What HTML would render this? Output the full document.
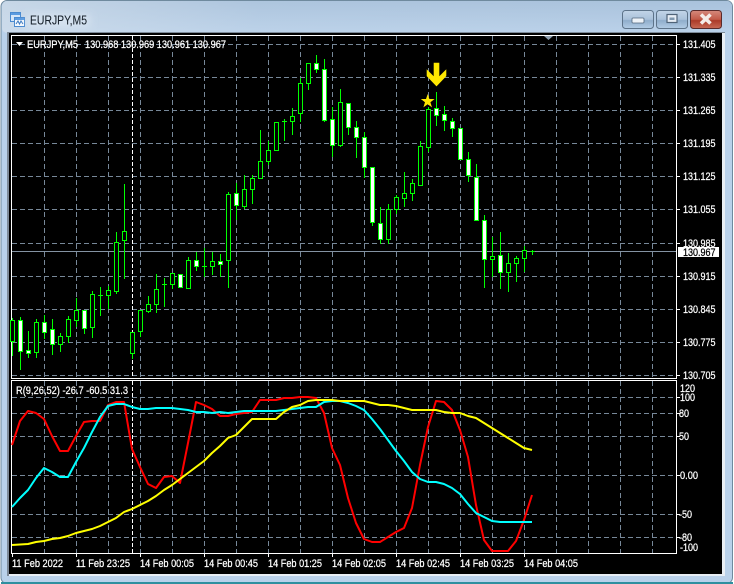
<!DOCTYPE html>
<html><head><meta charset="utf-8"><title>EURJPY,M5</title>
<style>
html,body{margin:0;padding:0;background:#fff;width:734px;height:584px;overflow:hidden}
svg{display:block}
text{font-family:"Liberation Sans",sans-serif;font-size:11px;fill:#fff;stroke:#fff;stroke-width:.25px}
</style></head><body>
<svg width="734" height="584" viewBox="0 0 734 584" xmlns="http://www.w3.org/2000/svg">
<defs>
<linearGradient id="tb" x1="0" y1="0" x2="0" y2="1"><stop offset="0" stop-color="#a9c2dc"/><stop offset="1" stop-color="#bad1e9"/></linearGradient>
<linearGradient id="tl" x1="0" y1="0" x2="1" y2="0"><stop offset="0" stop-color="#d4e0ec" stop-opacity=".7"/><stop offset=".35" stop-color="#d4e0ec" stop-opacity=".1"/><stop offset="1" stop-color="#d4e0ec" stop-opacity="0"/></linearGradient>
<linearGradient id="bn" x1="0" y1="0" x2="0" y2="1"><stop offset="0" stop-color="#c3d5e8"/><stop offset=".5" stop-color="#a9c1da"/><stop offset=".55" stop-color="#8fadcb"/><stop offset="1" stop-color="#b3cde6"/></linearGradient>
<linearGradient id="cl" x1="0" y1="0" x2="0" y2="1"><stop offset="0" stop-color="#d58a7d"/><stop offset=".5" stop-color="#c25a48"/><stop offset=".55" stop-color="#ab3a28"/><stop offset="1" stop-color="#c86a55"/></linearGradient>
<filter id="gl" x="-20%" y="-50%" width="140%" height="200%"><feGaussianBlur stdDeviation="4"/></filter>
</defs>
<!-- window -->
<rect x="1" y=".5" width="731.500" height="583" rx="6" fill="#b9d1ea" stroke="#6f8a9e"/>
<rect x="2" y="1" width="730" height="32" rx="5" fill="url(#tb)"/>
<rect x="2" y="1" width="730" height="32" rx="5" fill="url(#tl)"/>
<rect x="1" y="582" width="732" height="2" fill="#2f8f9f"/>
<rect x="7" y="32" width="718" height="544" fill="#e8eef4"/>
<rect x="7" y="32" width="2" height="544" fill="#7d8a98"/>
<rect x="7" y="32" width="718" height="1" fill="#7d8a98"/>
<rect x="9" y="33" width="713" height="541" fill="#000"/>
<!-- title icon -->
<g shape-rendering="crispEdges">
<rect x="10.500" y="12.500" width="10" height="9" fill="#d6e6f8" stroke="#4a8ad0"/>
<rect x="11" y="13" width="9" height="2" fill="#5b9be0"/>
<rect x="14.500" y="17.500" width="10" height="9" fill="#f4f8fd" stroke="#4a8ad0"/>
<rect x="15" y="18" width="9" height="2" fill="#5b9be0"/>
</g>
<path d="M16 24l2-3 1.500 3 1.500-3 2 3" fill="none" stroke="#3a78c0" stroke-width="1"/>
<rect x="28" y="14" width="62" height="13" fill="#e4edf6" opacity=".55" filter="url(#gl)"/>
<text x="30" y="24.500" textLength="57" lengthAdjust="spacingAndGlyphs" style="font-size:13px;fill:#18222c;stroke:#18222c;stroke-width:.1px">EURJPY,M5</text>
<!-- buttons -->
<rect x="622.500" y="10.500" width="31" height="18" rx="3" fill="url(#bn)" stroke="#5d7389"/>
<rect x="632" y="18" width="12" height="5" rx="1" fill="#eef3f8" stroke="#53687e" stroke-width=".8"/>
<rect x="656.500" y="10.500" width="31" height="18" rx="3" fill="url(#bn)" stroke="#5d7389"/>
<rect x="667" y="14.500" width="10" height="8" fill="#e6edf5" stroke="#4f6378" stroke-width="1.200"/>
<rect x="669.500" y="17.500" width="5" height="2.500" fill="#7f97ae"/>
<rect x="690.500" y="10.500" width="31" height="18" rx="3" fill="url(#cl)" stroke="#5a2a2a"/>
<path d="M701 14.500l9.500 9M710.500 14.500l-9.500 9" stroke="#f4ece8" stroke-width="3.600" fill="none"/>
<!-- grids -->
<g stroke="#778899" fill="none" stroke-dasharray="5 3" shape-rendering="crispEdges">
<path d="M12 44.500H676M12 77.500H676M12 110.500H676M12 143.500H676M12 176.500H676M12 209.500H676M12 243.500H676M12 276.500H676M12 309.500H676M12 342.500H676M12 375.500H676"/>
<path d="M44.500 36V378M76.500 36V378M108.500 36V378M140.500 36V378M172.500 36V378M204.500 36V378M236.500 36V378M268.500 36V378M300.500 36V378M332.500 36V378M364.500 36V378M396.500 36V378M428.500 36V378M460.500 36V378M492.500 36V378M524.500 36V378M556.500 36V378M588.500 36V378M620.500 36V378M652.500 36V378"/>
<path d="M12 397.500H676M12 413.500H676M12 436.500H676M12 475.500H676M12 514.500H676M12 537.500H676"/>
<path d="M44.500 381V553M76.500 381V553M108.500 381V553M140.500 381V553M172.500 381V553M204.500 381V553M236.500 381V553M268.500 381V553M300.500 381V553M332.500 381V553M364.500 381V553M396.500 381V553M428.500 381V553M460.500 381V553M492.500 381V553M524.500 381V553M556.500 381V553M588.500 381V553M620.500 381V553M652.500 381V553"/>
</g>
<path d="M132.500 36V378M132.500 381V553" stroke="#fff" stroke-dasharray="4 2" fill="none" shape-rendering="crispEdges"/>
<path d="M12 251.500H676" stroke="#8493a3" shape-rendering="crispEdges"/>
<!-- frames -->
<g fill="none" stroke="#fff" shape-rendering="crispEdges">
<rect x="11.500" y="35.500" width="665" height="343"/>
<rect x="11.500" y="380.500" width="665" height="173"/>
<path d="M677 44.500h3M677 77.500h3M677 110.500h3M677 143.500h3M677 176.500h3M677 209.500h3M677 243.500h3M677 276.500h3M677 309.500h3M677 342.500h3M677 375.500h3M677 397.500h3M677 413.500h3M677 436.500h3M677 475.500h3M677 514.500h3M677 537.500h3"/>
<path d="M12.500 553v4M76.500 553v4M140.500 553v4M204.500 553v4M268.500 553v4M332.500 553v4M396.500 553v4M460.500 553v4M524.500 553v4"/>
</g>
<polygon points="544,36 553,36 548.500,40" fill="#8fa0b0"/>
<!-- candles: wicks -->
<g shape-rendering="crispEdges">
<path fill="none" stroke="#0f0" d="M12.500 318V356M20.500 317V370M28.500 331V358M36.500 319V358M44.500 315V339M52.500 319V355M60.500 333V352M68.500 316V343M76.500 298V327M84.500 310V334M92.500 291V338M100.500 287V316M108.500 286V309M116.500 232V294M124.500 184V279M132.500 332V359M140.500 310V337M148.500 296V313M156.500 274V313M164.500 278V307M172.500 273V289M180.500 274V288M188.500 257V289M196.500 252V271M204.500 248V277M212.500 252V275M220.500 254V277M228.500 192V288M236.500 183V220M244.500 175V209M252.500 175V204M260.500 130V179M268.500 141V165M276.500 122V150M284.500 119V141M292.500 108V135M300.500 78V122M308.500 63V90M316.500 55V73M324.500 59V122M332.500 107V157M340.500 89V147M348.500 103V135M356.500 121V158M364.500 132V178M372.500 167V226M380.500 207V244M388.500 204V244M396.500 195V214M404.500 172V207M412.500 179V201M420.500 141V186M428.500 107V152M436.500 92V126M444.500 106V131M452.500 118V137M460.500 128V159M468.500 152V182M476.500 164V221M484.500 215V288M492.500 237V277M500.500 232V289M508.500 253V292M516.500 256V282M524.500 246V272M532.500 250V255M98 295.500h5M162 284.500h5M202 266.500h5M282 121.500h5M530 251.500h5"/>
<!-- bullish bodies -->
<g fill="#000" stroke="#0f0">
<rect x="10.500" y="320.500" width="4" height="21"/>
<rect x="34.500" y="322.500" width="4" height="30"/>
<rect x="58.500" y="336.500" width="4" height="8"/>
<rect x="66.500" y="319.500" width="4" height="17"/>
<rect x="74.500" y="310.500" width="4" height="10"/>
<rect x="90.500" y="294.500" width="4" height="33"/>
<rect x="106.500" y="290.500" width="4" height="5"/>
<rect x="114.500" y="242.500" width="4" height="49"/>
<rect x="122.500" y="231.500" width="4" height="9"/>
<rect x="130.500" y="332.500" width="4" height="21"/>
<rect x="138.500" y="310.500" width="4" height="21"/>
<rect x="146.500" y="304.500" width="4" height="7"/>
<rect x="154.500" y="289.500" width="4" height="15"/>
<rect x="170.500" y="273.500" width="4" height="11"/>
<rect x="186.500" y="260.500" width="4" height="28"/>
<rect x="210.500" y="261.500" width="4" height="5"/>
<rect x="226.500" y="194.500" width="4" height="66"/>
<rect x="242.500" y="189.500" width="4" height="17"/>
<rect x="250.500" y="178.500" width="4" height="11"/>
<rect x="258.500" y="161.500" width="4" height="17"/>
<rect x="266.500" y="150.500" width="4" height="11"/>
<rect x="274.500" y="122.500" width="4" height="28"/>
<rect x="290.500" y="116.500" width="4" height="5"/>
<rect x="298.500" y="83.500" width="4" height="30"/>
<rect x="306.500" y="63.500" width="4" height="20"/>
<rect x="338.500" y="102.500" width="4" height="43"/>
<rect x="386.500" y="209.500" width="4" height="30"/>
<rect x="394.500" y="197.500" width="4" height="12"/>
<rect x="402.500" y="193.500" width="4" height="5"/>
<rect x="410.500" y="183.500" width="4" height="10"/>
<rect x="418.500" y="146.500" width="4" height="39"/>
<rect x="426.500" y="109.500" width="4" height="38"/>
<rect x="490.500" y="256.500" width="4" height="3"/>
<rect x="506.500" y="263.500" width="4" height="9"/>
<rect x="514.500" y="258.500" width="4" height="5"/>
<rect x="522.500" y="250.500" width="4" height="8"/>
</g>
<!-- bearish bodies -->
<g fill="#fff" stroke="#0f0">
<rect x="18.500" y="320.500" width="4" height="31"/>
<rect x="26.500" y="350.500" width="4" height="3"/>
<rect x="42.500" y="322.500" width="4" height="10"/>
<rect x="50.500" y="329.500" width="4" height="15"/>
<rect x="82.500" y="310.500" width="4" height="18"/>
<rect x="178.500" y="274.500" width="4" height="13"/>
<rect x="194.500" y="260.500" width="4" height="6"/>
<rect x="218.500" y="261.500" width="4" height="3"/>
<rect x="234.500" y="193.500" width="4" height="12"/>
<rect x="314.500" y="63.500" width="4" height="6"/>
<rect x="322.500" y="69.500" width="4" height="51"/>
<rect x="330.500" y="119.500" width="4" height="26"/>
<rect x="346.500" y="103.500" width="4" height="24"/>
<rect x="354.500" y="127.500" width="4" height="10"/>
<rect x="362.500" y="137.500" width="4" height="30"/>
<rect x="370.500" y="167.500" width="4" height="55"/>
<rect x="378.500" y="223.500" width="4" height="16"/>
<rect x="434.500" y="108.500" width="4" height="7"/>
<rect x="442.500" y="114.500" width="4" height="6"/>
<rect x="450.500" y="121.500" width="4" height="7"/>
<rect x="458.500" y="128.500" width="4" height="31"/>
<rect x="466.500" y="159.500" width="4" height="16"/>
<rect x="474.500" y="177.500" width="4" height="43"/>
<rect x="482.500" y="220.500" width="4" height="39"/>
<rect x="498.500" y="255.500" width="4" height="17"/>
</g>
</g>
<!-- arrow & star -->
<polygon points="434,63 439,63 439,77 446,70 446,76 436.500,86 427,76 427,70 434,77" fill="#ffe800" stroke="#ffe800" stroke-width=".6"/>
<polygon points="427.700,94 429.400,99 434.600,99 430.400,102.200 432,107.400 427.700,104.200 423.400,107.400 425,102.200 420.800,99 426,99" fill="#ffe800"/>
<!-- lines -->
<g fill="none" stroke-width="2" stroke-linejoin="round">
<polyline stroke="#f00" points="12,445 20,421 28,411 36,413 44,419 52,436 60,451 68,451 76,436 84,422 92,421 100,421 108,405 116,402 124,402 132,449 140,467 148,484 156,488 164,477 172,476 180,483 188,443 196,402 204,405 212,409 220,416 228,416 236,414 244,413 252,412 260,400 268,400 276,400 284,398 292,398 300,397 308,397 316,398 324,413 332,448 340,465 348,498 356,523 364,539 372,542 380,542 388,537 396,532 404,528 412,508 420,465 428,427 436,401 444,402 452,410 460,430 468,457 476,505 484,540 492,551 500,551 508,551 516,541 524,520 532,495"/>
<polyline stroke="#0ff" points="12,507 20,498 28,490 36,478 44,468 52,472 60,477 68,477 76,462 84,448 92,432 100,417 108,406 116,404 124,404 132,407 140,409 148,409 156,408 164,408 172,408 180,409 188,410 196,412 204,412 212,413 220,412 228,413 236,412 244,411 252,411 260,411 268,411 276,411 284,410 292,409 300,408 308,407 316,407 324,402 332,401 340,401 348,403 356,406 364,410 372,419 380,429 388,440 396,451 404,461 412,472 420,479 428,482 436,482 444,484 452,488 460,494 468,504 476,513 484,517 492,521 500,522 508,522 516,522 524,522 532,522"/>
<polyline stroke="#ff0" points="12,545 28,544 36,542 44,541 52,539 60,538 68,536 76,533 84,531 92,529 100,526 108,522 116,518 124,512 132,509 140,505 148,501 156,496 164,490 172,485 180,479 188,473 196,467 204,461 212,453 220,446 228,438 236,435 244,427 252,419 260,419 268,419 276,419 284,412 292,407 300,405 308,401 316,400 324,400 332,400 340,401 348,401 356,401 364,401 372,403 380,405 388,405 396,406 404,408 412,410 420,410 428,410 436,410 444,412 452,413 460,413 468,416 476,418 484,423 492,428 500,433 508,438 516,443 524,448 532,450"/>
</g>
<!-- header text -->
<polygon points="16,42 23,42 19.500,46" fill="#fff"/>
<text x="27" y="48" textLength="51" lengthAdjust="spacingAndGlyphs">EURJPY,M5</text>
<text x="85" y="48" textLength="141" lengthAdjust="spacingAndGlyphs">130.968 130.969 130.961 130.967</text>
<text x="16" y="394" textLength="112" lengthAdjust="spacingAndGlyphs">R(9,26,52) -26.7 -60.5 31.3</text>
<!-- price axis -->
<g>
<text x="683" y="48" textLength="32.500" lengthAdjust="spacingAndGlyphs">131.405</text>
<text x="683" y="81" textLength="32.500" lengthAdjust="spacingAndGlyphs">131.335</text>
<text x="683" y="114" textLength="32.500" lengthAdjust="spacingAndGlyphs">131.265</text>
<text x="683" y="147" textLength="32.500" lengthAdjust="spacingAndGlyphs">131.195</text>
<text x="683" y="180" textLength="32.500" lengthAdjust="spacingAndGlyphs">131.125</text>
<text x="683" y="213" textLength="32.500" lengthAdjust="spacingAndGlyphs">131.055</text>
<text x="683" y="247" textLength="32.500" lengthAdjust="spacingAndGlyphs">130.985</text>
<text x="683" y="280" textLength="32.500" lengthAdjust="spacingAndGlyphs">130.915</text>
<text x="683" y="313" textLength="32.500" lengthAdjust="spacingAndGlyphs">130.845</text>
<text x="683" y="346" textLength="32.500" lengthAdjust="spacingAndGlyphs">130.775</text>
<text x="683" y="379" textLength="32.500" lengthAdjust="spacingAndGlyphs">130.705</text>
</g>
<rect x="678" y="247" width="41" height="10" fill="#fff"/>
<text x="683" y="256" textLength="32.500" lengthAdjust="spacingAndGlyphs" style="fill:#000;stroke:#000">130.967</text>
<!-- indicator axis -->
<g>
<text x="680" y="392" textLength="15" lengthAdjust="spacingAndGlyphs">120</text>
<text x="680" y="401" textLength="15" lengthAdjust="spacingAndGlyphs">100</text>
<text x="679" y="417" textLength="10" lengthAdjust="spacingAndGlyphs">80</text>
<text x="679" y="440" textLength="10" lengthAdjust="spacingAndGlyphs">50</text>
<text x="680" y="479" textLength="18" lengthAdjust="spacingAndGlyphs">0.00</text>
<text x="679" y="518" textLength="13" lengthAdjust="spacingAndGlyphs">-50</text>
<text x="679" y="541" textLength="13" lengthAdjust="spacingAndGlyphs">-80</text>
<text x="680" y="551" textLength="18" lengthAdjust="spacingAndGlyphs">-100</text>
</g>
<!-- time axis -->
<g>
<text x="12" y="567" textLength="51" lengthAdjust="spacingAndGlyphs">11 Feb 2022</text>
<text x="76" y="567" textLength="54" lengthAdjust="spacingAndGlyphs">11 Feb 23:25</text>
<text x="140" y="567" textLength="54" lengthAdjust="spacingAndGlyphs">14 Feb 00:05</text>
<text x="204" y="567" textLength="54" lengthAdjust="spacingAndGlyphs">14 Feb 00:45</text>
<text x="268" y="567" textLength="54" lengthAdjust="spacingAndGlyphs">14 Feb 01:25</text>
<text x="332" y="567" textLength="54" lengthAdjust="spacingAndGlyphs">14 Feb 02:05</text>
<text x="396" y="567" textLength="54" lengthAdjust="spacingAndGlyphs">14 Feb 02:45</text>
<text x="460" y="567" textLength="54" lengthAdjust="spacingAndGlyphs">14 Feb 03:25</text>
<text x="524" y="567" textLength="54" lengthAdjust="spacingAndGlyphs">14 Feb 04:05</text>
</g>
</svg>
</body></html>
